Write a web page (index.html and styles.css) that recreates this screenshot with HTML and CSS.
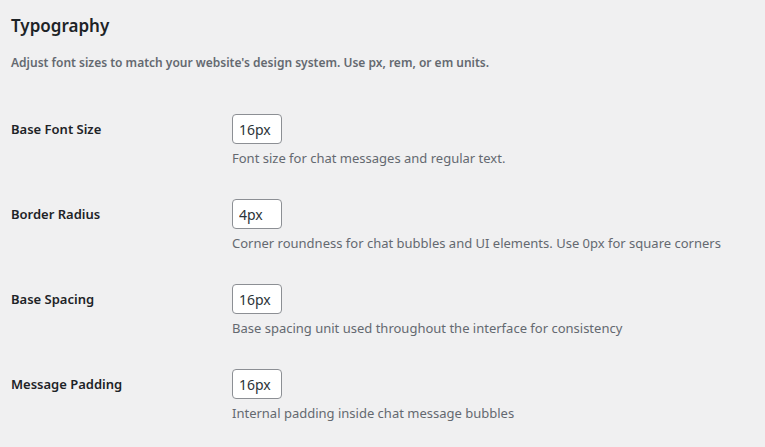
FILE: index.html
```html
<!DOCTYPE html>
<html>
<head>
<meta charset="utf-8">
<link rel="stylesheet" href="styles.css">
</head>
<body>
<div class="wrap">
  <h2 class="title">Typography</h2>
  <p class="intro">Adjust font sizes to match your website's design system. Use px, rem, or em units.</p>
  <div class="form">
    <div class="row">
      <div class="label">Base Font Size</div>
      <div class="field">
        <input class="input" type="text" value="16px">
        <p class="desc">Font size for chat messages and regular text.</p>
      </div>
    </div>
    <div class="row">
      <div class="label">Border Radius</div>
      <div class="field">
        <input class="input" type="text" value="4px">
        <p class="desc">Corner roundness for chat bubbles and UI elements. Use 0px for square corners</p>
      </div>
    </div>
    <div class="row">
      <div class="label">Base Spacing</div>
      <div class="field">
        <input class="input" type="text" value="16px">
        <p class="desc">Base spacing unit used throughout the interface for consistency</p>
      </div>
    </div>
    <div class="row">
      <div class="label">Message Padding</div>
      <div class="field">
        <input class="input" type="text" value="16px">
        <p class="desc">Internal padding inside chat message bubbles</p>
      </div>
    </div>
  </div>
</div>
</body>
</html>
```

FILE: styles.css
```css
html, body {
  margin: 0;
  padding: 0;
  background: #f0f0f1;
}
body {
  font-family: "Noto Sans", "Open Sans", sans-serif;
  color: #1d2327;
}
.wrap {
  padding: 12px 11px 0 11px;
}
.title {
  margin: 0;
  font-size: 17px;
  font-weight: 600;
  line-height: 28px;
  color: #1d2327;
}
.intro {
  margin: 13px 0 0 0;
  font-size: 12px;
  font-weight: 600;
  line-height: 20px;
  color: #646970;
}
.form {
  margin-top: 41px;
}
.row {
  display: flex;
  height: 85px;
}
.label {
  width: 221px;
  flex: none;
  font-size: 13px;
  font-weight: 600;
  line-height: 20px;
  padding-top: 5px;
  color: #1d2327;
}
.field {
  display: flex;
  flex-direction: column;
  align-items: flex-start;
}
.input {
  box-sizing: border-box;
  width: 50px;
  height: 30px;
  margin: 0;
  padding: 0 6px;
  border: 1px solid #8c8f94;
  border-radius: 4px;
  background: #fff;
  font-family: inherit;
  font-size: 14px;
  color: #2c3338;
}
.desc {
  margin: 4px 0 0 0;
  font-size: 13px;
  line-height: 20px;
  color: #646970;
}
```
